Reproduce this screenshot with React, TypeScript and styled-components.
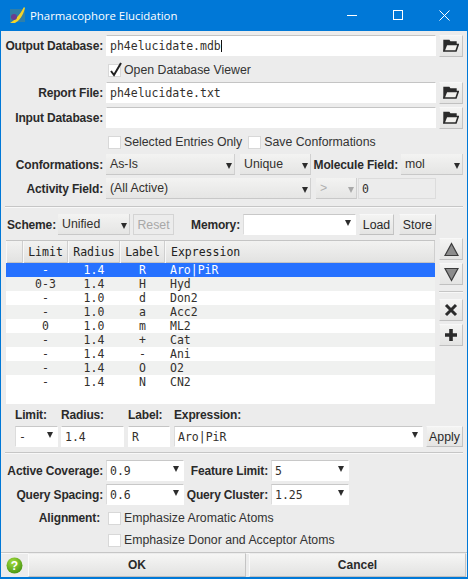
import React from 'react';
import styled, { createGlobalStyle } from 'styled-components';

const GlobalStyle = createGlobalStyle`
  html, body {
    margin: 0;
    padding: 0;
    background: #ececec;
  }
`;

const Window = styled.div`
  width: 468px;
  height: 579px;
  box-sizing: border-box;
  border: 1px solid #0078d7;
  border-bottom-width: 2px;
  border-top: 0;
  background: #ececec;
  display: flex;
  flex-direction: column;
  font-family: 'Liberation Sans', Arial, sans-serif;
  font-size: 12px;
  color: #2a2a2a;
  overflow: hidden;
`;

const TitleBar = styled.div`
  height: 31px;
  flex: none;
  background: #0078d7;
  color: #fff;
  display: flex;
  align-items: center;
  padding-left: 8px;
  font-family: 'Open Sans', sans-serif;
  font-size: 11.4px;
`;

const TitleText = styled.span`
  margin-left: 4px;
  flex: 1;
`;

const WindowControl = styled.div`
  width: 46px;
  height: 31px;
  display: flex;
  align-items: center;
  justify-content: center;
`;

const Body = styled.div`
  flex: 1;
  display: flex;
  flex-direction: column;
  padding: 0 4px;
`;

const Row = styled.div<{ $top: number; $height?: number }>`
  display: flex;
  align-items: center;
  margin-top: ${p => p.$top}px;
  height: ${p => p.$height ?? 21}px;
  flex: none;
`;

const FieldLabel = styled.label<{ $width: number; $gap?: number; $left?: number }>`
  width: ${p => p.$width}px;
  margin-right: ${p => p.$gap ?? 3}px;
  margin-left: ${p => p.$left ?? 0}px;
  flex: none;
  text-align: right;
  font-weight: 700;
  font-size: 12px;
  letter-spacing: -0.15px;
  white-space: nowrap;
`;

const TextInput = styled.div<{ $width?: number; $left?: number; $disabled?: boolean }>`
  ${p => (p.$width ? `width: ${p.$width}px; flex: none;` : 'flex: 1;')}
  margin-left: ${p => p.$left ?? 0}px;
  height: 21px;
  box-sizing: border-box;
  background: ${p => (p.$disabled ? '#ececec' : '#fff')};
  border: 1px solid ${p => (p.$disabled ? '#dcdcdc' : 'transparent')};
  border-top-color: ${p => (p.$disabled ? '#dcdcdc' : '#c4c4c4')};
  padding-left: 3px;
  font-family: 'DejaVu Sans Mono', monospace;
  font-size: 11.5px;
  line-height: 20px;
  color: #33302c;
  white-space: nowrap;
`;

const TextCaret = styled.span`
  display: inline-block;
  width: 1px;
  height: 12px;
  background: #111;
  vertical-align: -2px;
`;

const ToolButton = styled.button<{ $width?: number; $height?: number; $left?: number }>`
  width: ${p => p.$width ?? 24}px;
  height: ${p => p.$height ?? 22}px;
  margin-left: ${p => p.$left ?? 3}px;
  flex: none;
  box-sizing: border-box;
  padding: 0;
  display: flex;
  align-items: center;
  justify-content: center;
  background: linear-gradient(#f4f4f3, #e4e4e3);
  border: 1px solid #ececec;
  border-right-color: #c4c4c4;
  border-bottom-color: #c0c0c0;
  border-top-color: #f8f8f8;
  font-family: 'Liberation Sans', Arial, sans-serif;
  font-size: 12.3px;
  color: #2a2a2a;
`;

const DisabledButton = styled(ToolButton)`
  color: #a8a8a8;
  border: 1px solid #d4d4d4;
  background: #ececec;
`;

const Combo = styled.div<{ $width: number; $white?: boolean; $mono?: boolean; $left?: number; $disabled?: boolean }>`
  width: ${p => p.$width}px;
  margin-left: ${p => p.$left ?? 0}px;
  height: 21px;
  flex: none;
  box-sizing: border-box;
  position: relative;
  padding-left: ${p => (p.$white ? 3 : 4)}px;
  line-height: 21px;
  white-space: nowrap;
  background: ${p => (p.$white ? '#fff' : 'linear-gradient(#f3f3f2, #e5e5e4)')};
  border-top: ${p => (p.$white ? '1px solid #c8c8c8' : '0')};
  border-left: ${p => (p.$white ? '1px solid #dcdcdc' : '0')};
  border-bottom: 1px solid ${p => (p.$white ? '#fff' : '#c8c8c8')};
  border-right: 1px solid ${p => (p.$white ? '#fff' : '#d0d0d0')};
  color: ${p => (p.$disabled ? '#b0b0b0' : '#33302c')};
  font-family: ${p => (p.$mono ? "'DejaVu Sans Mono', monospace" : "'Liberation Sans', Arial, sans-serif")};
  font-size: ${p => (p.$mono ? '11.5px' : '12.3px')};
`;

const ComboArrow = styled.span<{ $raised?: boolean; $disabled?: boolean }>`
  position: absolute;
  right: ${p => (p.$raised ? 4 : 2)}px;
  top: ${p => (p.$raised ? 5 : 9)}px;
  width: 0;
  height: 0;
  border-left: 3px solid transparent;
  border-right: 3px solid transparent;
  border-top: 6px solid ${p => (p.$disabled ? '#a8a8a8' : '#2c2c2c')};
`;

const CheckRow = styled.div<{ $top: number; $left: number }>`
  display: flex;
  align-items: center;
  margin-top: ${p => p.$top}px;
  margin-left: ${p => p.$left}px;
  height: 14px;
  flex: none;
`;

const Box = styled.span<{ $left?: number }>`
  width: 13px;
  height: 13px;
  flex: none;
  box-sizing: border-box;
  background: #fff;
  border: 1px solid #d8d8d8;
  margin-left: ${p => p.$left ?? 0}px;
  margin-right: 3px;
  position: relative;
`;

const CheckMark = styled.svg`
  position: absolute;
  left: 0;
  top: -4px;
`;

const CheckText = styled.span`
  font-size: 12.3px;
  color: #333;
  white-space: nowrap;
`;

const Separator = styled.div<{ $top: number; $left?: number; $right?: number }>`
  height: 2px;
  flex: none;
  box-sizing: border-box;
  margin-top: ${p => p.$top}px;
  margin-left: ${p => p.$left ?? 0}px;
  margin-right: ${p => p.$right ?? 0}px;
  background: #f8f8f8;
  border-top: 1px solid #c6c6c6;
`;

const TableArea = styled.div`
  display: flex;
  margin-top: 3px;
  flex: none;
`;

const Table = styled.div`
  width: 429px;
  margin-left: 1px;
  margin-top: 2px;
  height: 164px;
  flex: none;
  background: #fff;
`;

const Columns = styled.div<{ $bg?: string; $color?: string }>`
  display: grid;
  grid-template-columns: 17px 45px 52px 45px 1fr;
  height: 14px;
  background: ${p => p.$bg ?? 'transparent'};
  color: ${p => p.$color ?? '#33302c'};
  font-family: 'DejaVu Sans Mono', monospace;
  font-size: 11.5px;
  line-height: 14px;
`;

const HeaderRow = styled(Columns)`
  height: 23px;
  line-height: 22px;
  box-sizing: border-box;
  border-top: 1px solid #c4c4c4;
  border-bottom: 1px solid #c4c4c4;
  background: linear-gradient(#f2f2f1, #e2e2e1);
  color: #222;
`;

const HeaderCell = styled.div<{ $left?: boolean }>`
  text-align: ${p => (p.$left ? 'left' : 'center')};
  padding-left: ${p => (p.$left ? 5 : 0)}px;
  border-left: 1px solid #f8f8f8;
  border-right: 1px solid #cfcfcf;
  box-sizing: border-box;
`;

const Cell = styled.div<{ $left?: boolean }>`
  text-align: ${p => (p.$left ? 'left' : 'center')};
  padding-left: ${p => (p.$left ? 5 : 0)}px;
  white-space: nowrap;
`;

const SideButtons = styled.div`
  display: flex;
  flex-direction: column;
  flex: none;
  margin-left: 4px;
`;

const SideRule = styled.div`
  width: 24px;
  margin: 3px 0 6px;
  height: 2px;
  box-sizing: border-box;
  background: #f8f8f8;
  border-top: 1px solid #c6c6c6;
`;

const SideButton = styled(ToolButton)`
  margin-left: 0;
  margin-bottom: 3px;
`;

const ColumnLabels = styled.div`
  display: grid;
  grid-template-columns: 46px 67px 46px 1fr;
  margin-top: 4px;
  margin-left: 10px;
  height: 14px;
  flex: none;
  font-weight: 700;
  font-size: 12px;
  letter-spacing: -0.15px;
  line-height: 14px;
`;

const Footer = styled.div`
  display: flex;
  align-items: center;
  height: 24px;
  margin: -1px -4px 0;
  padding-left: 5px;
  flex: none;
`;

const FooterButton = styled.button<{ $width: number; $left: number }>`
  width: ${p => p.$width}px;
  margin-left: ${p => p.$left}px;
  height: 24px;
  flex: none;
  background: linear-gradient(#f6f6f5, #e2e2e1);
  border: 1px solid #ececec;
  border-left-color: #fafafa;
  border-bottom-color: #c0c0c0;
  border-right-color: #c4c4c4;
  font-family: 'Liberation Sans', Arial, sans-serif;
  font-weight: 700;
  font-size: 12px;
  color: #2a2a2a;
`;

const Logo = () => (
  <svg width="17" height="17" viewBox="0 0 17 17">
    <rect x="1" y="2" width="15" height="13" fill="#2f7fa8" />
    <path d="M1 16 C6 13 10 9 15 0 L16 1 C14 9 10 14 6 16 Z" fill="#f4d32a" />
    <circle cx="5" cy="10" r="3" fill="#6a3d8f" />
  </svg>
);

const FolderIcon = () => (
  <svg width="16" height="13" viewBox="0 0 16 13">
    <path d="M1 12 V1.500 H6 L7 3 H13 V6 H3 Z" fill="#2b2b2b" stroke="#2b2b2b" strokeWidth="1.400" />
    <path d="M1 12 L3.500 5.500 H15.200 L13 12 Z" fill="#f2f1ee" stroke="#2b2b2b" strokeWidth="1.600" />
  </svg>
);

const ArrowIcon = ({ down }: { down?: boolean }) => (
  <svg width="15" height="15" viewBox="0 0 15 15">
    <path d={down ? 'M1 1.500 H14 L7.500 13.500 Z' : 'M1 13.500 H14 L7.500 1.500 Z'} fill="#8c8c8c" stroke="#3c3c3c" strokeWidth="1.200" />
  </svg>
);

const features = [
  ['-', '1.4', 'R', 'Aro|PiR'],
  ['0-3', '1.4', 'H', 'Hyd'],
  ['-', '1.0', 'd', 'Don2'],
  ['-', '1.0', 'a', 'Acc2'],
  ['0', '1.0', 'm', 'ML2'],
  ['-', '1.4', '+', 'Cat'],
  ['-', '1.4', '-', 'Ani'],
  ['-', '1.4', 'O', 'O2'],
  ['-', '1.4', 'N', 'CN2'],
];

const rowColour = (i: number) => (i === 0 ? '#2671ff' : i % 2 ? '#f0f1f0' : '#fff');

const App: React.FC = () => {
  return (
    <Window>
      <GlobalStyle />
      <TitleBar>
        <Logo />
        <TitleText>Pharmacophore Elucidation</TitleText>
        <WindowControl>
          <svg width="11" height="11" viewBox="0 0 11 11"><path d="M0 5.500 H10" stroke="#fff" /></svg>
        </WindowControl>
        <WindowControl>
          <svg width="11" height="11" viewBox="0 0 11 11"><rect x="0.500" y="0.500" width="9" height="9" fill="none" stroke="#fff" /></svg>
        </WindowControl>
        <WindowControl>
          <svg width="11" height="11" viewBox="0 0 11 11"><path d="M0.500 0.500 L10.500 10.500 M10.500 0.500 L0.500 10.500" stroke="#fff" /></svg>
        </WindowControl>
      </TitleBar>
      <Body>
        <Row $top={4}>
          <FieldLabel $width={98}>Output Database:</FieldLabel>
          <TextInput>ph4elucidate.mdb<TextCaret /></TextInput>
          <ToolButton><FolderIcon /></ToolButton>
        </Row>
        <CheckRow $top={7} $left={103}>
          <Box>
            <CheckMark width="16" height="17" viewBox="0 0 16 17">
              <path d="M2 10 L5 14 L12 2" fill="none" stroke="#222" strokeWidth="2" />
            </CheckMark>
          </Box>
          <CheckText>Open Database Viewer</CheckText>
        </CheckRow>
        <Row $top={5}>
          <FieldLabel $width={98}>Report File:</FieldLabel>
          <TextInput>ph4elucidate.txt</TextInput>
          <ToolButton><FolderIcon /></ToolButton>
        </Row>
        <Row $top={4}>
          <FieldLabel $width={98}>Input Database:</FieldLabel>
          <TextInput />
          <ToolButton><FolderIcon /></ToolButton>
        </Row>
        <CheckRow $top={7} $left={103}>
          <Box />
          <CheckText>Selected Entries Only</CheckText>
          <Box $left={6} />
          <CheckText>Save Conformations</CheckText>
        </CheckRow>
        <Row $top={5}>
          <FieldLabel $width={98}>Conformations:</FieldLabel>
          <Combo $width={129}>As-Is<ComboArrow /></Combo>
          <Combo $width={71} $left={5}>Unique<ComboArrow /></Combo>
          <FieldLabel $width={87}>Molecule Field:</FieldLabel>
          <Combo $width={62}>mol<ComboArrow /></Combo>
        </Row>
        <Row $top={3}>
          <FieldLabel $width={98}>Activity Field:</FieldLabel>
          <Combo $width={205}>(All Active)<ComboArrow /></Combo>
          <Combo $width={41} $left={5} $disabled>&gt;<ComboArrow $disabled /></Combo>
          <TextInput $width={78} $left={1} $disabled>0</TextInput>
        </Row>
        <Separator $top={7} />
        <Row $top={6}>
          <FieldLabel $width={51} $gap={2}>Scheme:</FieldLabel>
          <Combo $width={72}>Unified<ComboArrow /></Combo>
          <DisabledButton $width={41} $height={21}>Reset</DisabledButton>
          <FieldLabel $width={49} $left={17}>Memory:</FieldLabel>
          <Combo $width={113} $white><ComboArrow $raised /></Combo>
          <ToolButton $width={35} $height={21}>Load</ToolButton>
          <ToolButton $width={37} $height={21} $left={5}>Store</ToolButton>
        </Row>
        <TableArea>
          <Table>
            <HeaderRow>
              <HeaderCell />
              <HeaderCell>Limit</HeaderCell>
              <HeaderCell>Radius</HeaderCell>
              <HeaderCell>Label</HeaderCell>
              <HeaderCell $left>Expression</HeaderCell>
            </HeaderRow>
            {features.map((f, i) => (
              <Columns key={i} $bg={rowColour(i)} $color={i === 0 ? '#fff' : undefined}>
                <Cell />
                <Cell>{f[0]}</Cell>
                <Cell>{f[1]}</Cell>
                <Cell>{f[2]}</Cell>
                <Cell $left>{f[3]}</Cell>
              </Columns>
            ))}
          </Table>
          <SideButtons>
            <SideButton><ArrowIcon /></SideButton>
            <SideButton><ArrowIcon down /></SideButton>
            <SideRule />
            <SideButton>
              <svg width="14" height="14" viewBox="0 0 14 14"><path d="M2 2 L12 12 M12 2 L2 12" stroke="#2b2b2b" strokeWidth="3" /></svg>
            </SideButton>
            <SideButton>
              <svg width="14" height="14" viewBox="0 0 14 14"><path d="M7 1 V13 M1 7 H13" stroke="#2b2b2b" strokeWidth="3.600" /></svg>
            </SideButton>
          </SideButtons>
        </TableArea>
        <ColumnLabels>
          <span>Limit:</span>
          <span>Radius:</span>
          <span>Label:</span>
          <span>Expression:</span>
        </ColumnLabels>
        <Row $top={4}>
          <Combo $width={43} $white $mono $left={10}>-<ComboArrow $raised /></Combo>
          <TextInput $width={63} $left={3}>1.4</TextInput>
          <TextInput $width={42} $left={4}>R</TextInput>
          <Combo $width={249} $white $mono $left={4}>Aro|PiR<ComboArrow $raised /></Combo>
          <ToolButton $width={37} $height={21}>Apply</ToolButton>
        </Row>
        <Separator $top={5} />
        <Row $top={6}>
          <FieldLabel $width={98}>Active Coverage:</FieldLabel>
          <Combo $width={78} $white $mono>0.9<ComboArrow $raised /></Combo>
          <FieldLabel $width={84}>Feature Limit:</FieldLabel>
          <Combo $width={78} $white $mono>5<ComboArrow $raised /></Combo>
        </Row>
        <Row $top={3}>
          <FieldLabel $width={98}>Query Spacing:</FieldLabel>
          <Combo $width={78} $white $mono>0.6<ComboArrow $raised /></Combo>
          <FieldLabel $width={84}>Query Cluster:</FieldLabel>
          <Combo $width={78} $white $mono>1.25<ComboArrow $raised /></Combo>
        </Row>
        <Row $top={6} $height={14}>
          <FieldLabel $width={95} $gap={8}>Alignment:</FieldLabel>
          <Box />
          <CheckText>Emphasize Aromatic Atoms</CheckText>
        </Row>
        <CheckRow $top={8} $left={103}>
          <Box />
          <CheckText>Emphasize Donor and Acceptor Atoms</CheckText>
        </CheckRow>
        <Separator $top={5} $left={-4} $right={-4} />
        <Footer>
          <svg width="17" height="17" viewBox="0 0 17 17">
            <defs>
              <radialGradient id="helpBall" cx="0.400" cy="0.300" r="0.800">
                <stop offset="0" stopColor="#a5dc3c" />
                <stop offset="1" stopColor="#3f8f10" />
              </radialGradient>
            </defs>
            <circle cx="8.500" cy="8.500" r="8" fill="url(#helpBall)" />
            <text x="8.500" y="13" textAnchor="middle" fill="#fff" fontFamily="'Liberation Sans', Arial, sans-serif" fontWeight="700" fontSize="12">?</text>
          </svg>
          <FooterButton $width={218} $left={5}>OK</FooterButton>
          <FooterButton $width={217} $left={3}>Cancel</FooterButton>
        </Footer>
      </Body>
    </Window>
  );
};

export default App;
